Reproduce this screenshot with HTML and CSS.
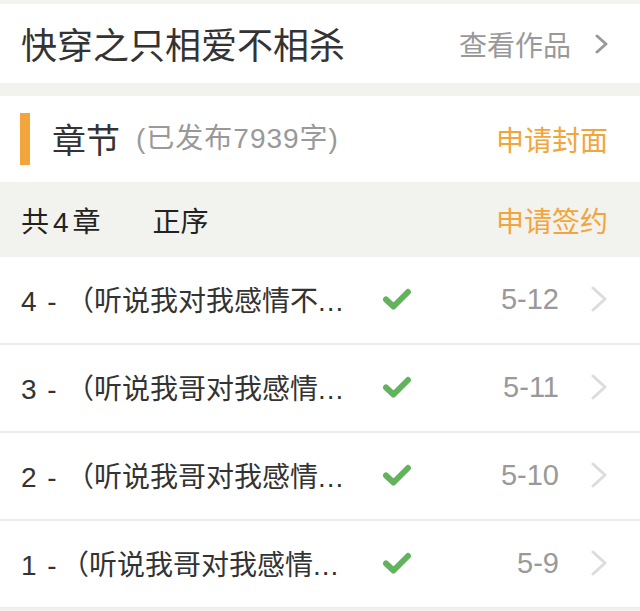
FILE: index.html
```html
<!DOCTYPE html>
<html lang="zh-CN">
<head>
<meta charset="utf-8">
<title>章节</title>
<link rel="stylesheet" href="styles.css">
</head>
<body>
<div class="page">
  <header class="book">
    <h1 class="book-title">快穿之只相爱不相杀</h1>
    <div class="book-link">
      <span class="link-text">查看作品</span>
      <svg class="chev-dark" width="13" height="20" viewBox="0 0 13 20"><path d="M2 2 L11 10 L2 18" fill="none" stroke="#999" stroke-width="3" stroke-linecap="round" stroke-linejoin="round"/></svg>
    </div>
  </header>

  <section class="chapters">
    <div class="chap-head">
      <span class="mark"></span>
      <span class="chap-title">章节</span>
      <span class="chap-count">(已发布7939字)</span>
      <span class="action">申请封面</span>
    </div>
    <div class="sort-bar">
      <span class="total">共4章</span>
      <span class="order">正序</span>
      <span class="action">申请签约</span>
    </div>

    <ul class="list">
      <li class="row">
        <span class="name"><span class="num">4 -</span><span class="title">（听说我对我感情不</span><span class="dots">...</span></span>
        <svg class="check" width="30" height="24" viewBox="0 0 30 24"><path d="M4 12.5 L11.5 19.5 L26 5" fill="none" stroke="#62b35c" stroke-width="6" stroke-linecap="round" stroke-linejoin="round"/></svg>
        <span class="date">5-12</span>
        <svg class="chev" width="16" height="26" viewBox="0 0 16 26"><path d="M2 2 L14 13 L2 24" fill="none" stroke="#dcdcdc" stroke-width="3" stroke-linecap="round" stroke-linejoin="round"/></svg>
      </li>
      <li class="row">
        <span class="name"><span class="num">3 -</span><span class="title">（听说我哥对我感情</span><span class="dots">...</span></span>
        <svg class="check" width="30" height="24" viewBox="0 0 30 24"><path d="M4 12.5 L11.5 19.5 L26 5" fill="none" stroke="#62b35c" stroke-width="6" stroke-linecap="round" stroke-linejoin="round"/></svg>
        <span class="date">5-11</span>
        <svg class="chev" width="16" height="26" viewBox="0 0 16 26"><path d="M2 2 L14 13 L2 24" fill="none" stroke="#dcdcdc" stroke-width="3" stroke-linecap="round" stroke-linejoin="round"/></svg>
      </li>
      <li class="row">
        <span class="name"><span class="num">2 -</span><span class="title">（听说我哥对我感情</span><span class="dots">...</span></span>
        <svg class="check" width="30" height="24" viewBox="0 0 30 24"><path d="M4 12.5 L11.5 19.5 L26 5" fill="none" stroke="#62b35c" stroke-width="6" stroke-linecap="round" stroke-linejoin="round"/></svg>
        <span class="date">5-10</span>
        <svg class="chev" width="16" height="26" viewBox="0 0 16 26"><path d="M2 2 L14 13 L2 24" fill="none" stroke="#dcdcdc" stroke-width="3" stroke-linecap="round" stroke-linejoin="round"/></svg>
      </li>
      <li class="row">
        <span class="name"><span class="num num-narrow">1 -</span><span class="title">（听说我哥对我感情</span><span class="dots">...</span></span>
        <svg class="check" width="30" height="24" viewBox="0 0 30 24"><path d="M4 12.5 L11.5 19.5 L26 5" fill="none" stroke="#62b35c" stroke-width="6" stroke-linecap="round" stroke-linejoin="round"/></svg>
        <span class="date">5-9</span>
        <svg class="chev" width="16" height="26" viewBox="0 0 16 26"><path d="M2 2 L14 13 L2 24" fill="none" stroke="#dcdcdc" stroke-width="3" stroke-linecap="round" stroke-linejoin="round"/></svg>
      </li>
    </ul>
  </section>
</div>
</body>
</html>
```
FILE: styles.css
```css
* { box-sizing: border-box; }
html, body {
  margin: 0;
  padding: 0;
  background: #f2f2ee;
}
body {
  font-family: "Liberation Sans", "Noto Sans CJK SC", sans-serif;
  color: #333;
}
.page {
  padding-top: 4px;
}
.book {
  height: 79px;
  background: #fff;
  display: flex;
  align-items: center;
  padding: 0 32px 0 21px;
}
.book-title {
  margin: 0;
  font-size: 36px;
  font-weight: normal;
  color: #333;
  font-family: "Noto Sans CJK SC", sans-serif;
  line-height: 1;
  position: relative;
  top: -1px;
}
.book-link {
  margin-left: auto;
  display: flex;
  align-items: center;
}
.link-text {
  font-size: 28px;
  color: #999;
  font-family: "Noto Sans CJK SC", sans-serif;
  line-height: 1;
}
.chev-dark {
  flex: none;
  margin-left: 24px;
}
.chapters {
  margin-top: 13px;
}
.chap-head {
  height: 86px;
  background: #fff;
  display: flex;
  align-items: center;
  padding: 0 32px 0 20px;
}
.mark {
  width: 10px;
  height: 52px;
  background: #f2a53a;
  margin-right: 22px;
}
.chap-title {
  font-size: 34px;
  color: #333;
  font-family: "Noto Sans CJK SC", sans-serif;
  line-height: 1;
}
.chap-count {
  font-size: 28px;
  letter-spacing: 1px;
  color: #999;
  margin-left: 16px;
  line-height: 1;
}
.action {
  margin-left: auto;
  font-size: 28px;
  color: #f2a53a;
  font-family: "Noto Sans CJK SC", sans-serif;
}
.sort-bar {
  height: 75px;
  display: flex;
  align-items: center;
  padding: 0 32px 0 21px;
  font-size: 28px;
  color: #222;
}
.total {
  letter-spacing: 4px;
}
.order {
  margin-left: 48px;
  font-family: "Noto Sans CJK SC", sans-serif;
}
.list {
  list-style: none;
  margin: 0;
  padding: 0;
  background: #fff;
}
.row {
  height: 88px;
  display: flex;
  align-items: center;
  padding: 0 33px 2px 21px;
  border-bottom: 2px solid #ededed;
}
.name {
  width: 361px;
  font-size: 28px;
  color: #333;
  white-space: nowrap;
  display: flex;
  align-items: baseline;
}
.num {
  display: inline-block;
  width: 45px;
  word-spacing: 3px;
}
.num-narrow {
  width: 40px;
}
.title {
  font-family: "Noto Sans CJK SC", sans-serif;
}
.dots {
  letter-spacing: 1px;
}
.check {
  flex: none;
}
.date {
  margin-left: auto;
  font-size: 29px;
  color: #999;
}
.chev {
  flex: none;
  margin-left: 32px;
}
```
